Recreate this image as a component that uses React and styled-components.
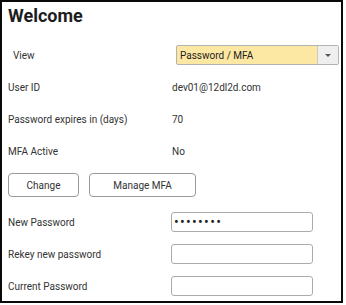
import React from "react";
import styled, { createGlobalStyle } from "styled-components";

const GlobalStyle = createGlobalStyle`
  body {
    margin: 0;
    background: #fff;
    font-family: Roboto, "Liberation Sans", Arial, sans-serif;
  }
`;

function App() {
  return (
    <>
      <GlobalStyle />
      <Panel>
        <Title>Welcome</Title>
        <Row $top={12}>
          <Label $indent={5}>View</Label>
          <Select>
            <SelectText>Password / MFA</SelectText>
            <SelectArrow>
              <Caret />
            </SelectArrow>
          </Select>
        </Row>
        <Row>
          <Label>User ID</Label>
          <Value>dev01@12dl2d.com</Value>
        </Row>
        <Row>
          <Label>Password expires in (days)</Label>
          <Value>70</Value>
        </Row>
        <Row>
          <Label>MFA Active</Label>
          <Value>No</Value>
        </Row>
        <ButtonRow>
          <Button $width={71}>Change</Button>
          <Button $width={107}>Manage MFA</Button>
        </ButtonRow>
        <Row $top={9}>
          <Label>New Password</Label>
          <Input type="password" defaultValue="12345678" />
        </Row>
        <Row>
          <Label>Rekey new password</Label>
          <Input type="password" />
        </Row>
        <Row>
          <Label>Current Password</Label>
          <Input type="password" />
        </Row>
      </Panel>
    </>
  );
}

const Panel = styled.div`
  width: 343px;
  height: 303px;
  box-sizing: border-box;
  border: 2px solid #0a0a0a;
  padding: 3px 0 0 6px;
  overflow: hidden;
  color: #333;
  font-size: 10px;
`;

const Title = styled.h1`
  margin: 0;
  font-size: 18px;
  line-height: 22px;
  font-weight: bold;
  color: #1d1d1f;
`;

const Row = styled.div`
  display: flex;
  align-items: center;
  height: 32px;
  margin-top: ${(props) => props.$top || 0}px;
`;

const Label = styled.div`
  width: 164px;
  box-sizing: border-box;
  padding-left: ${(props) => props.$indent || 0}px;
  color: #333;
`;

const Value = styled.div`
  color: #333;
`;

const Select = styled.div`
  display: flex;
  width: 163px;
  height: 20px;
  margin-left: 4px;
  box-sizing: border-box;
  border: 1px solid #b3b3b3;
  border-radius: 2px;
  background: #fde8a3;
  overflow: hidden;
`;

const SelectText = styled.div`
  flex: 1;
  display: flex;
  align-items: center;
  padding-left: 3px;
  color: #222;
`;

const SelectArrow = styled.div`
  width: 20px;
  display: flex;
  align-items: center;
  justify-content: center;
  border-left: 1px solid #c9c9c9;
  background: #efefef;
`;

const Caret = styled.span`
  width: 0;
  height: 0;
  border-left: 3px solid transparent;
  border-right: 3px solid transparent;
  border-top: 3px solid #555;
`;

const ButtonRow = styled.div`
  display: flex;
  gap: 10px;
  margin-top: 6px;
`;

const Button = styled.button`
  width: ${(props) => props.$width}px;
  height: 24px;
  padding: 0;
  background: #fff;
  border: 1px solid #9a9a9a;
  border-radius: 4px;
  font-family: Roboto, "Liberation Sans", Arial, sans-serif;
  font-size: 10px;
  color: #333;
`;

const Input = styled.input`
  width: 142px;
  height: 20px;
  margin-left: -1px;
  box-sizing: border-box;
  border: 1px solid #ababab;
  border-radius: 3px;
  padding: 0 2px;
  font-family: Roboto, "Liberation Sans", Arial, sans-serif;
  font-size: 14px;
  letter-spacing: 1.3px;
  color: #222;
  background: #fff;
  outline: none;
`;

export default App;
